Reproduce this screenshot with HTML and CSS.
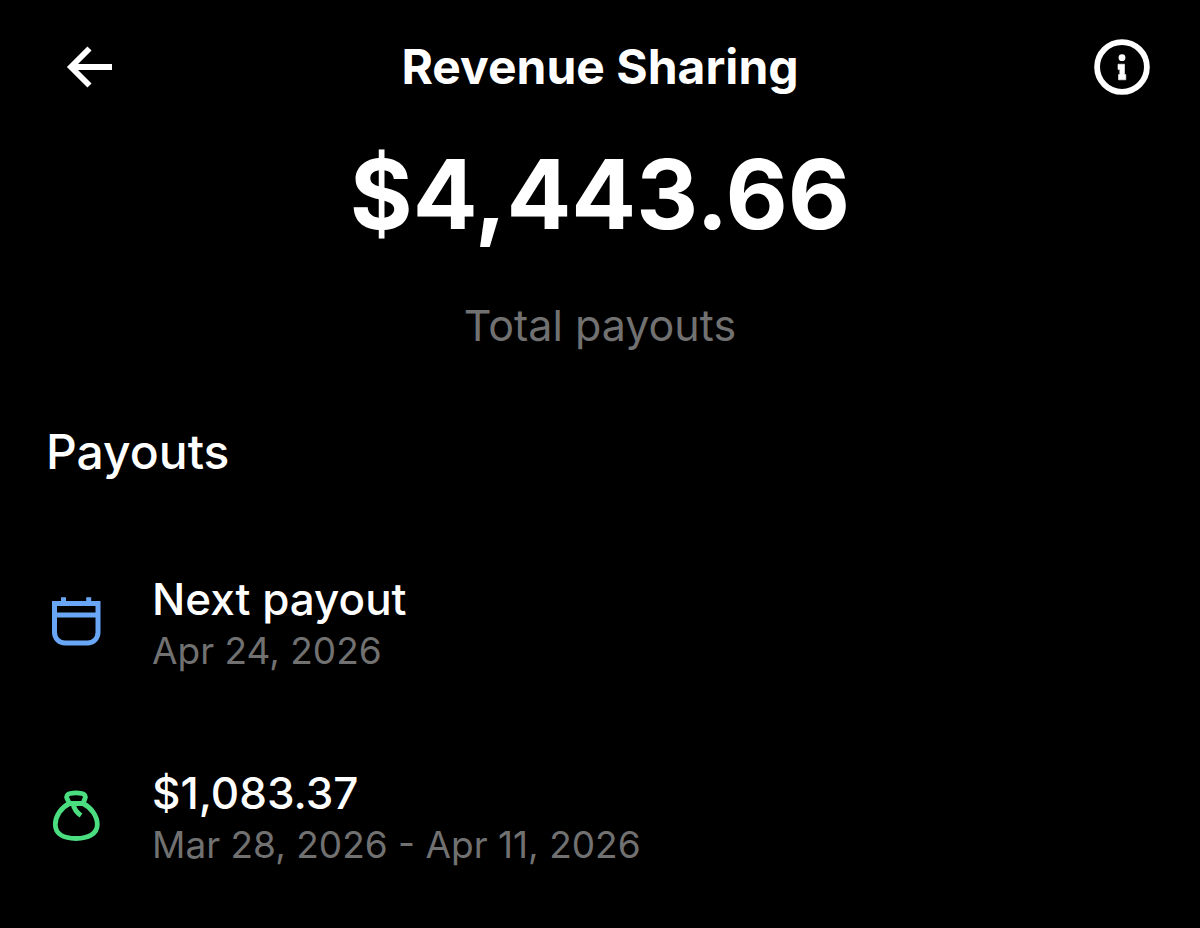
FILE: index.html
```
<!DOCTYPE html>
<html lang="en">
<head>
  <meta charset="UTF-8">
  <meta name="viewport" content="width=device-width, initial-scale=1.0">
  <title>Revenue Sharing</title>
  <link rel="stylesheet" href="styles.css">
</head>
<body>

  <header class="header">
    <button class="icon-button" type="button" aria-label="Back">
      <svg width="64" height="64" viewBox="0 0 64 64" fill="none" stroke="currentColor" stroke-width="5.8">
        <path d="M54 32H13M31.500 13.500L13 32l18.500 18.500"/>
      </svg>
    </button>
    <h1 class="title">Revenue Sharing</h1>
    <button class="icon-button info-button" type="button" aria-label="Information">
      <svg width="64" height="64" viewBox="0 0 64 64">
        <circle cx="32" cy="32" r="24.900" fill="none" stroke="currentColor" stroke-width="5.8"/>
        <circle cx="32" cy="22.700" r="3.400" fill="currentColor"/>
        <path d="M28 29.200h6.500v10.300h1.300v5.300h-7.300v-5.300h1.300v-5h-1.800z" fill="currentColor" stroke="currentColor" stroke-width=".6" stroke-linejoin="round"/>
      </svg>
    </button>
  </header>

  <main>
    <section class="total">
      <p class="total-amount">$4,443.66</p>
      <p class="total-label">Total payouts</p>
    </section>

    <section class="payouts">
      <h2 class="payouts-heading">Payouts</h2>
      <ul class="payout-list">
        <li class="payout">
          <svg class="payout-icon calendar" viewBox="2 2 60 60" fill="none" stroke="currentColor" stroke-width="5">
            <path d="M10.500 12.500h43.500v29a10.500 10.500 0 0 1-10.500 10.500h-22.500a10.500 10.500 0 0 1-10.500-10.500zM10.500 24h43.500M19.500 6.300v5M44.700 6.300v5"/>
          </svg>
          <div class="payout-text">
            <h3 class="payout-title">Next payout</h3>
            <p class="payout-date">Apr 24, 2026</p>
          </div>
        </li>
        <li class="payout">
          <svg class="payout-icon money" viewBox="2 2 60 60" fill="none" stroke="currentColor" stroke-width="4.8" stroke-linejoin="round">
            <path d="M25.500 18.500C17 22.500 11.300 31 11.300 39.500c0 9.500 8.500 14 20.700 14s21.300-4.500 21.300-14c0-8.500-6-17-14.300-21z"/>
            <path d="M25.500 18.500l-2.500-5c-1-2.300.5-4.300 3-5q6-1.200 12 0c2.500.7 4 2.700 3 5l-2 5"/>
            <path d="M29 18.500c1 5.500 3.500 9 8 12"/>
          </svg>
          <div class="payout-text">
            <h3 class="payout-title">$1,083.37</h3>
            <p class="payout-date">Mar 28, 2026 - Apr 11, 2026</p>
          </div>
        </li>
      </ul>
    </section>
  </main>

</body>
</html>
```
FILE: styles.css
```
body {
  margin: 0;
  background-color: #000;
  color: #fff;
  font-family: Inter, "Liberation Sans", sans-serif;
}

h1,
h2,
h3,
p,
ul {
  margin: 0;
  padding: 0;
}

.header {
  display: grid;
  grid-template-columns: 1fr auto 1fr;
  align-items: center;
  padding: 35px 46px 35px 58px;
}

/* the side paddings differ, so the right column gives the rest back */
.header .title {
  margin-right: 12px;
}

.icon-button {
  display: flex;
  justify-self: start;
  padding: 0;
  border: none;
  background: none;
  color: #fff;
  cursor: pointer;
}

.info-button {
  justify-self: end;
}

.title {
  font-size: 48px;
  line-height: 60px;
  font-weight: 700;
}

.total {
  text-align: center;
}

.total-amount {
  font-size: 96px;
  line-height: 120px;
  font-weight: 700;
}

.total-label {
  margin-top: 43px;
  color: #717171;
  font-size: 43px;
  line-height: 56px;
}

.payouts {
  padding: 69px 46px 48px;
}

.payouts-heading {
  font-size: 48px;
  line-height: 60px;
  font-weight: 500;
}

.payout-list {
  display: flex;
  flex-direction: column;
  gap: 90px;
  margin-top: 89px;
  list-style: none;
}

.payout {
  display: flex;
  align-items: center;
  gap: 46px;
}

.payout-icon {
  flex: none;
  width: 60px;
  height: 60px;
}

.calendar {
  color: #69a6f5;
}

.money {
  color: #4ade80;
}

.payout-title {
  font-size: 44px;
  line-height: 56px;
  font-weight: 500;
}

.payout-date {
  color: #717171;
  font-size: 37px;
  line-height: 48px;
}
```
